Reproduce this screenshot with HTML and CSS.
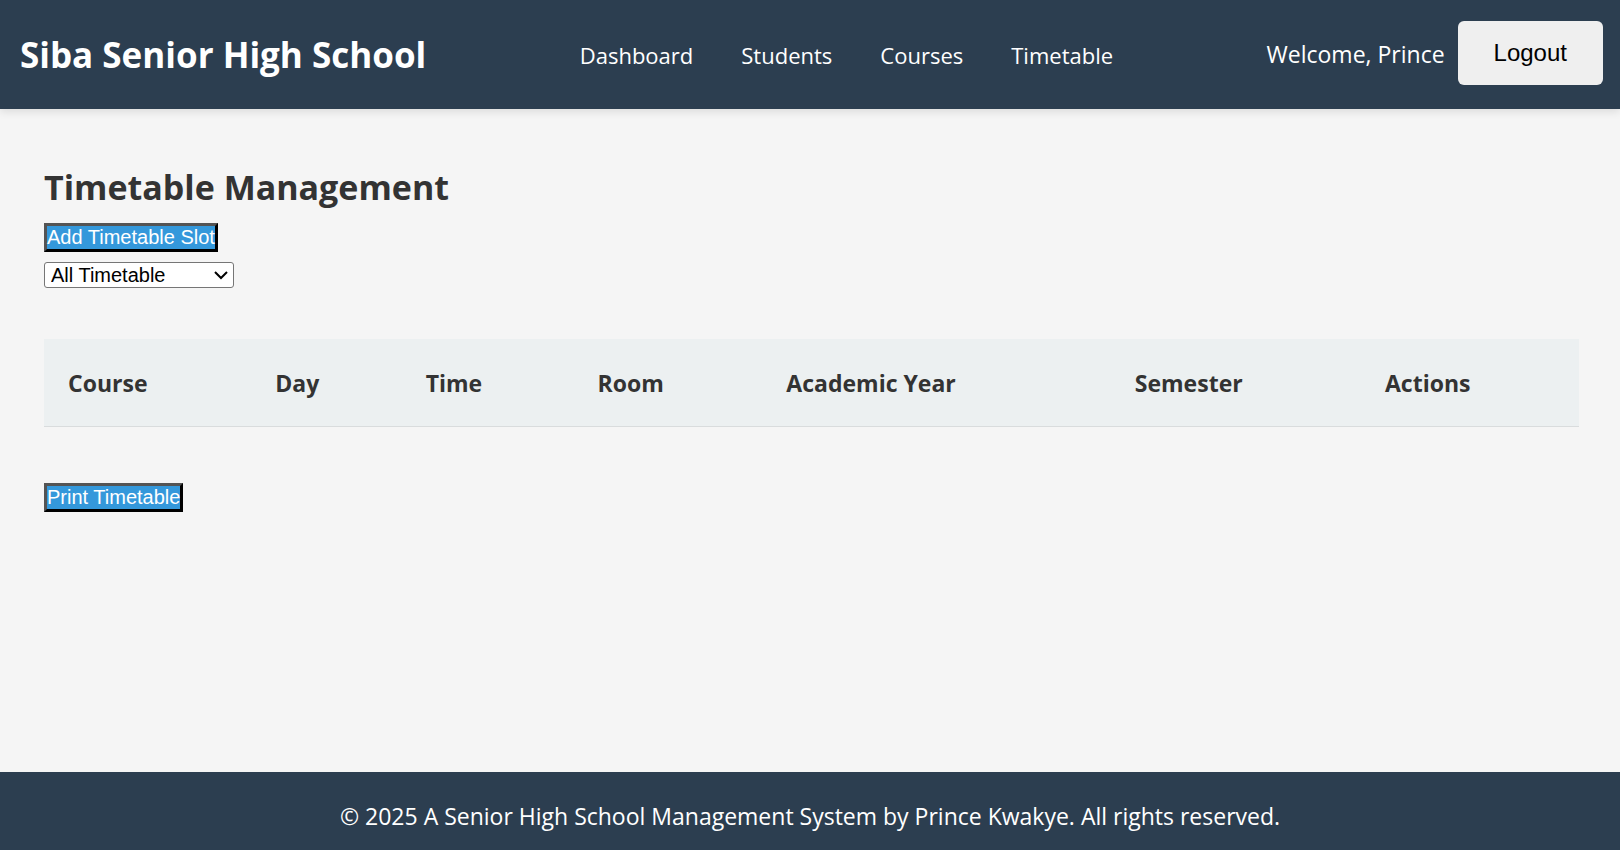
FILE: index.html
```
<!DOCTYPE html>
<html lang="en">
<head>
<meta charset="utf-8">
<meta name="viewport" content="width=device-width, initial-scale=1">
<title>Timetable Management</title>
<link rel="stylesheet" href="styles.css">
</head>
<body>
<header class="site-header">
  <h1 class="brand">Siba Senior High School</h1>
  <nav class="main-nav">
    <a href="#dashboard">Dashboard</a>
    <a href="#students">Students</a>
    <a href="#courses">Courses</a>
    <a href="#timetable">Timetable</a>
  </nav>
  <div class="user">
    <span class="welcome">Welcome, Prince</span>
    <button type="button" class="logout">Logout</button>
  </div>
</header>
<main class="content">
  <h2 class="page-title">Timetable Management</h2>
  <button type="button" class="action">Add Timetable Slot</button>
  <select class="filter" aria-label="Filter timetable">
    <option>All Timetable</option>
  </select>
  <table class="slots">
    <colgroup>
      <col class="col-course"><col class="col-day"><col class="col-time"><col class="col-room"><col class="col-year"><col class="col-semester"><col class="col-actions">
    </colgroup>
    <thead>
      <tr>
        <th scope="col">Course</th>
        <th scope="col">Day</th>
        <th scope="col">Time</th>
        <th scope="col">Room</th>
        <th scope="col">Academic Year</th>
        <th scope="col">Semester</th>
        <th scope="col">Actions</th>
      </tr>
    </thead>
    <tbody></tbody>
  </table>
  <button type="button" class="action">Print Timetable</button>
</main>
<footer class="site-footer">
  <p>© 2025 A Senior High School Management System by Prince Kwakye. All rights reserved.</p>
</footer>
</body>
</html>
```
FILE: styles.css
```
* {
  box-sizing: border-box;
  margin: 0;
  padding: 0;
}

body {
  display: flex;
  flex-direction: column;
  min-height: 100vh;
  background: #f5f5f5;
  color: #333;
  font-family: "Segoe UI", "Open Sans", "Noto Sans", sans-serif;
  font-size: 23px;
  line-height: 36px;
}

.site-header {
  display: flex;
  justify-content: space-between;
  align-items: center;
  padding: 21px 17px 21px 20px;
  background: #2c3e50;
  color: #fff;
  box-shadow: 0 3px 8px rgba(0, 0, 0, 0.1);
}

.brand {
  font-size: 35px;
  line-height: 54px;
}

.main-nav {
  display: flex;
  gap: 48px;
  font-size: 22px;
}

.main-nav a {
  color: #fff;
  text-decoration: none;
}

.user {
  display: flex;
  align-items: flex-start;
  gap: 13px;
}

.welcome {
  line-height: 67px;
}

.logout {
  padding: 14px 36px;
  border: 0;
  border-radius: 6px;
  background: #efefef;
  color: #000;
  font: 24px/36px Arial, "Liberation Sans", sans-serif;
}

.content {
  flex: 1;
  display: flex;
  flex-direction: column;
  align-items: flex-start;
  padding: 51px 41px 48px 44px;
}

.page-title {
  margin-bottom: 9px;
  font-size: 34px;
  line-height: 54px;
}

.action {
  border: 3px outset #000;
  background: #3498db;
  color: #fff;
  font: 20px/23px Arial, "Liberation Sans", sans-serif;
}

.filter {
  appearance: none;
  width: 190px;
  height: 26px;
  margin-top: 10px;
  padding: 0 24px 0 6px;
  border: 1px solid #767676;
  border-radius: 3px;
  background: #fff url("data:image/svg+xml,%3Csvg xmlns='http://www.w3.org/2000/svg' width='14' height='10' viewBox='0 0 14 10'%3E%3Cpath d='M1 2l6 6 6-6' fill='none' stroke='%23000' stroke-width='2'/%3E%3C/svg%3E") no-repeat right 5px center;
  color: #000;
  font: 20px Arial, "Liberation Sans", sans-serif;
}

.slots {
  width: 100%;
  margin: 51px 0 56px;
  border-collapse: collapse;
  table-layout: fixed;
}

.slots th {
  padding: 26px 24px 25px;
  border-bottom: 1px solid #d9dcdd;
  background: #ecf0f1;
  text-align: left;
}

.col-course { width: 13.5%; }
.col-day { width: 9.8%; }
.col-time { width: 11.2%; }
.col-room { width: 12.3%; }
.col-year { width: 22.7%; }
.col-semester { width: 16.3%; }
.col-actions { width: 14.2%; }

.site-footer {
  padding: 26px 24px 16px;
  background: #2c3e50;
  color: #fff;
  text-align: center;
}
```
